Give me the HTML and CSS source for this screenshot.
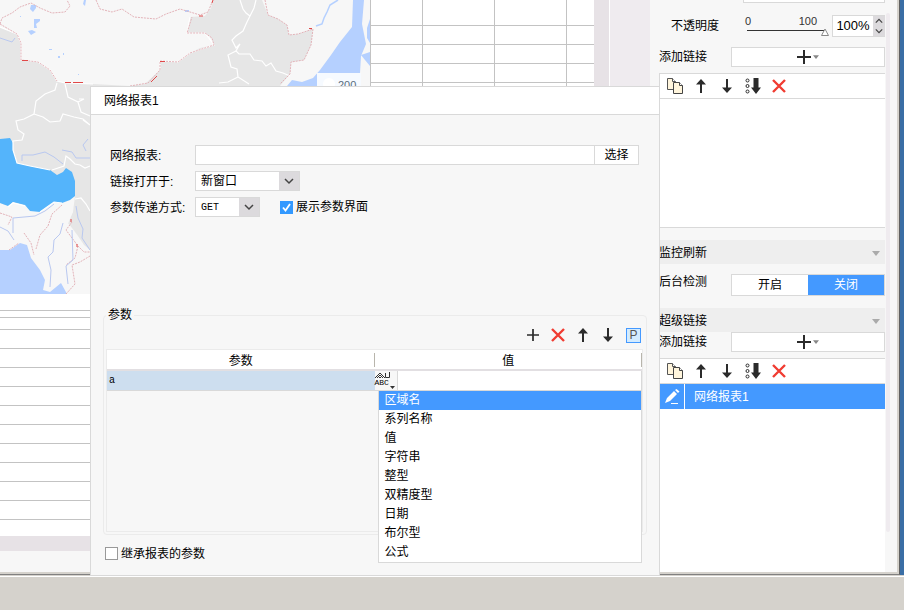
FILE: index.html
```html
<!DOCTYPE html>
<html lang="zh-CN">
<head>
    <meta charset="UTF-8">
    <meta name="viewport" content="width=device-width, initial-scale=1.0">
    <title>网络报表1</title>
    <link rel="stylesheet" href="styles.css">
</head>
<body>
<!--  shared icons  -->
<svg class="sprite" aria-hidden="true">
  <symbol id="i-plus" viewBox="0 0 14 14"><path d="M7 0v14M0 7h14" fill="none" stroke="#2b2b2b" stroke-width="2"/></symbol>
  <symbol id="i-cross" viewBox="0 0 14 14"><path d="M1 1l12 12M13 1L1 13" fill="none" stroke="#f03c32" stroke-width="2.400"/></symbol>
  <symbol id="i-up" viewBox="0 0 14 14"><path d="M7 0l5 5.500H8V14H6V5.500H2z" fill="#2b2b2b"/></symbol>
  <symbol id="i-down" viewBox="0 0 14 14"><path d="M7 14l5-5.500H8V0H6v8.500H2z" fill="#2b2b2b"/></symbol>
  <symbol id="i-bottom" viewBox="0 0 16 16">
    <path d="M8.500 0h5v9.500H16L11 16 6 9.500h2.500z" fill="#2b2b2b"/>
    <g fill="#fff" stroke="#2b2b2b"><circle cx="2.500" cy="2.500" r="1.500"/><circle cx="2.500" cy="8" r="1.500"/><circle cx="2.500" cy="13.500" r="1.500"/></g>
  </symbol>
  <symbol id="i-copy" viewBox="0 0 18 18">
    <path d="M1.500 1.500h5l3 3v8h-8z" fill="#fff5dc" stroke="#555"/><path d="M6.500 1.500v3h3" fill="#fff" stroke="#555"/>
    <path d="M7.500 5.500h6l3 3v8h-9z" fill="#fff5dc" stroke="#444"/><path d="M13.500 5.500v3h3" fill="#fff" stroke="#444"/>
  </symbol>
  <symbol id="i-caret" viewBox="0 0 8 5"><path d="M0 0h8L4 5z" fill="currentColor"/></symbol>
</svg>

<div class="desktop">
  <div class="window">
<!--  report canvas  -->
    <main class="canvas">
      <div class="left">
        <div class="map">
          <svg viewBox="0 0 370 294" role="img" aria-label="地图">
            <rect width="370" height="294" fill="#f7f7f7"/>
            <path d="M0 27L17 34L21 43L21 60L38 62L50 70L57 81L65 83L93 84L130 86L145 84L160 70L160 61L178 62L190 53L200 48L214 45L212 38L205 33L187 33L190 17L205 16L211 8L213 0L262 0L268 15L278 19L287 25L289 35L298 34L313 29L311 45L304 60L291 62L290 74L280 86L280 294L90 294L90 250L84 245L78 236L72 228L67 222L73 212L75 196L60 205L0 205Z" fill="#e6e6e6"/>
            <path d="M0 203L8 206L13 202L25 205L40 206L62 200L73 200L73 212L67 226L75 235L78 247L85 252L90 252L90 294L0 294Z" fill="#f7f7f7"/>
            <path d="M0 139L10 138L13 143L13 150L17 163L30 166L50 170L57 175L63 172L66 168L72 172L75 181L75 196L70 200L62 203L54 202L40 212L30 211L25 205L13 202L8 206L0 203Z" fill="#54b4fb"/>
            <g fill="#b5d0ff">
              <path d="M0 250L10 250L20 243L27 245L31 258L40 270L45 280L43 290L50 292L61 283L67 294L0 294Z"/>
              <path d="M353 0L364 0L362 24L366 44L361 56L360 73L317 73L317 86L287 86L292 80L302 82L313 78L320 70L331 55L340 42L352 27Z"/>
              <path d="M370 19L367 28L367 38L370 43ZM361 55L370 52V66L365 60Z"/>
              <path d="M31 5h5v3l-3 4-3-3zM34 19h6v2l-4 3 1 4h-3zM28 31l4-1 4 2-5 3zM84 0h2l-1 6-2-2zM185 10h4v2h-4zM20 16h1v1h-1zM49 49h3v1h-3zM58 56h2v2h-2zM63 53h1v2h-1zM78 74h1v1h-1z"/>
            </g>
            <path d="M338 0L330 5L327 12L324 18L322 24L316 26" fill="none" stroke="#b5d0ff" stroke-width="1.500"/>
            <g fill="none" stroke="#fff" stroke-width="1.200">
              <path d="M0 27L17 34L21 43L21 60L38 62L50 70L57 81L65 83L93 84M160 70L160 61L178 62L190 53L214 45L205 33L187 33L190 17"/>
              <path d="M240 0L243 9L246 13L250 16L247 22L243 31L236 36L232 40L236 48L240 44L236 51L239 54L250 54L254 60L262 61L266 66L271 63L276 71L283 73L290 76"/>
              <path d="M256 0L254 8L250 16M236 51L228 55L231 67L237 69L238 77L249 84M238 77L228 82L219 83"/>
              <path d="M57 83L55 90L45 94L36 101L34 114L24 119L16 121L18 130L24 134L22 140L13 141L13 150L17 163L30 166L50 170M65 84L68 97L78 102L81 112L90 116M78 102L84 99L79 99M34 114L43 117L50 122L60 121L63 114L74 117L83 119L90 125M52 170L64 166L66 156L70 159L75 164L80 165L85 168L90 166M75 199L81 198L86 204L90 211M83 120L90 125"/>
              <path d="M25 206L13 203L8 207M62 203L54 202L40 212"/>
            </g>
            <g fill="none" stroke="#e3b3b9" stroke-width="1" stroke-dasharray="2 1">
              <path d="M0 24L2 18L12 13L20 7L31 3L40 8L52 13L65 12L70 6L67 0M96 0L100 9L112 12L122 9L134 17L156 19L166 14L180 9L200 15L208 12L213 0"/>
              <path d="M0 24L17 34L21 43L21 60L38 62L50 70L57 81M130 86L148 83L160 70L160 61L178 62L190 53L214 45L212 38L205 33L187 33L192 17"/>
              <path d="M265 0L268 15L278 19L287 25L289 35L298 34L313 29L311 45L304 60L291 62L290 74L280 84"/>
              <path d="M62 205L52 214L48 226L40 235L36 249M0 213L12 217L8 225M24 233L31 243L34 255M72 222L66 230L78 246L84 252L90 252M66 294L75 284L72 265L80 262L90 256M9 250L19 243M78 246L75 258L66 265"/>
            </g>
            <path d="M65 82.500h6M73 82.500h10M22 60.500h6M151 82l6-6M160 61.500h5M212 3l1-3M199 16h4M71 219v3M77 244v3M309 28.500h3" stroke="#e04848"/>
            <g fill="none" stroke="#b9c8f0">
              <path d="M13 233L13 218L35 216L45 211L54 204M63 223L60 234L54 240L53 252L48 257L51 270L50 287M72 230L73 260L66 266L68 284M22 161L22 155L33 155L45 152L54 157L63 164M62 150L72 152L76 158L90 158M0 227L8 231L14 240M76 206L78 218L83 229L82 238L90 250M88 139L83 145L86 151M0 38L12 42L15 38"/>
            </g>
            <rect x="317" y="73" width="44" height="21" fill="#f6faff"/>
            <circle cx="329" cy="84" r="6" fill="#fff"/>
            <text class="scale" x="338" y="89">200</text>
          </svg>
        </div>
        <table class="sheet rows">
          <tr class="gap"><td></td></tr>
          <tr class="thin"><td></td></tr>
          <tr class="half"><td></td></tr>
          <tr><td></td></tr>
          <tr><td></td></tr>
          <tr><td></td></tr>
          <tr><td></td></tr>
          <tr><td></td></tr>
          <tr><td></td></tr>
          <tr><td></td></tr>
          <tr><td></td></tr>
          <tr><td></td></tr>
          <tr><td></td></tr>
        </table>
        <div class="foot"></div>
      </div>
      <table class="sheet cells">
        <tr class="tall"><td></td><td></td><td></td><td></td></tr>
        <tr><td></td><td></td><td></td><td></td></tr>
        <tr><td></td><td></td><td></td><td></td></tr>
        <tr><td></td><td></td><td></td><td></td></tr>
        <tr><td></td><td></td><td></td><td></td></tr>
      </table>
      <div class="edge"></div>
      <div class="gutter"></div>
    </main>

<!--  properties panel  -->
    <aside class="panel">
      <div class="props">
        <div class="cut"></div>
        <div class="row opacity">
          <label for="opacity">不透明度</label>
          <div class="slider">
            <div class="marks"><span>0</span><span>100</span></div>
            <input type="range" id="opacity" min="0" max="100" value="100">
          </div>
          <div class="spin">
            <input type="text" value="100%" aria-label="不透明度数值">
            <div class="steps">
              <button aria-label="增加"><svg viewBox="0 0 10 6"><path d="M1 5l4-4 4 4"/></svg></button>
              <button aria-label="减少"><svg viewBox="0 0 10 6"><path d="M1 1l4 4 4-4"/></svg></button>
            </div>
          </div>
        </div>
        <div class="row link">
          <span class="name">添加链接</span>
          <button class="add" aria-label="添加链接"><svg class="icon"><use href="#i-plus"/></svg><svg class="caret"><use href="#i-caret"/></svg></button>
        </div>
        <div class="list short">
          <div class="tools">
            <button aria-label="复制"><svg class="big"><use href="#i-copy"/></svg></button>
            <button aria-label="上移"><svg class="icon"><use href="#i-up"/></svg></button>
            <button aria-label="下移"><svg class="icon"><use href="#i-down"/></svg></button>
            <button aria-label="置底"><svg class="mid"><use href="#i-bottom"/></svg></button>
            <button aria-label="删除"><svg class="icon"><use href="#i-cross"/></svg></button>
          </div>
        </div>
        <button class="section">监控刷新<svg class="caret"><use href="#i-caret"/></svg></button>
        <div class="row check">
          <span class="name">后台检测</span>
          <div class="toggle"><button>开启</button><button class="on">关闭</button></div>
        </div>
        <button class="section">超级链接<svg class="caret"><use href="#i-caret"/></svg></button>
        <div class="row">
          <span class="name">添加链接</span>
          <button class="add" aria-label="添加超级链接"><svg class="icon"><use href="#i-plus"/></svg><svg class="caret"><use href="#i-caret"/></svg></button>
        </div>
        <div class="list long">
          <div class="tools">
            <button aria-label="复制"><svg class="big"><use href="#i-copy"/></svg></button>
            <button aria-label="上移"><svg class="icon"><use href="#i-up"/></svg></button>
            <button aria-label="下移"><svg class="icon"><use href="#i-down"/></svg></button>
            <button aria-label="置底"><svg class="mid"><use href="#i-bottom"/></svg></button>
            <button aria-label="删除"><svg class="icon"><use href="#i-cross"/></svg></button>
          </div>
          <div class="item">
            <button class="edit" aria-label="编辑"><svg class="mid" viewBox="0 0 16 16"><path d="M1 14l2-5 7-7 3 3-7 7zM11 1l1.500-1 3 2.500L14 4z" fill="#fff"/><path d="M7 14.500h7" stroke="#fff"/></svg></button>
            <span>网络报表1</span>
          </div>
        </div>
      </div>
      <div class="scroll"></div>
    </aside>
  </div>

<!--  web report dialog  -->
  <section class="dialog">
    <h1>网络报表1</h1>
    <form class="form">
      <div class="field">
        <label for="report">网络报表:</label>
        <input type="text" id="report" class="path">
        <button type="button" class="pick">选择</button>
      </div>
      <div class="field">
        <label for="target">链接打开于:</label>
        <select id="target" class="wide"><option>新窗口</option></select>
      </div>
      <div class="field">
        <label for="method">参数传递方式:</label>
        <select id="method" class="narrow"><option>GET</option></select>
        <label class="tick show"><input type="checkbox" checked>展示参数界面</label>
      </div>
    </form>
    <fieldset>
      <legend>参数</legend>
      <div class="actions">
        <button aria-label="添加"><svg class="small"><use href="#i-plus"/></svg></button>
        <button aria-label="删除"><svg class="icon"><use href="#i-cross"/></svg></button>
        <button aria-label="上移"><svg class="icon"><use href="#i-up"/></svg></button>
        <button aria-label="下移"><svg class="icon"><use href="#i-down"/></svg></button>
        <button class="param" aria-label="参数">P</button>
      </div>
      <div class="grid">
        <table class="params">
          <thead><tr><th>参数</th><th>值</th></tr></thead>
          <tbody>
            <tr>
              <td class="key">a</td>
              <td class="value">
                <div class="editor">
                  <button class="type" aria-label="值类型">
                    <svg viewBox="0 0 22 18"><path d="M0 6l5-5 5 5M2 6l3-3 3 3M4 6l1-1 1 1M10.500 1v4.500h4V0" fill="none" stroke="#333"/><path d="M15 14h5l-2.500 3z" fill="#333"/></svg>
                    <span>ABC</span>
                  </button>
                  <input type="text" aria-label="值">
                </div>
                <ul class="menu" role="listbox" aria-label="值类型">
                  <li role="option" aria-selected="true" class="active">区域名</li>
                  <li role="option">系列名称</li>
                  <li role="option">值</li>
                  <li role="option">字符串</li>
                  <li role="option">整型</li>
                  <li role="option">双精度型</li>
                  <li role="option">日期</li>
                  <li role="option">布尔型</li>
                  <li role="option">公式</li>
                </ul>
              </td>
            </tr>
          </tbody>
        </table>
      </div>
    </fieldset>
    <div class="inherit">
      <label class="tick"><input type="checkbox">继承报表的参数</label>
    </div>
  </section>
</div>
<footer class="taskbar"></footer>
</body>
</html>
```

FILE: styles.css
```css
* {
box-sizing:border-box;
}
body {
margin:0;
min-height:100vh;
display:flex;
flex-direction:column;
background:#d5d2cc;
color:#000;
font:12px/16px "Liberation Sans", "Noto Sans CJK SC", sans-serif;
}
button, input, select {
margin:0;
padding:0;
border:0;
border-radius:0;
background:none;
color:inherit;
font:inherit;
}
.sprite {
display:none;
}
svg {
display:block;
}
.icon {
width:14px;
height:14px;
}
.small {
width:12px;
height:12px;
}
.mid {
width:16px;
height:16px;
}
.big {
width:18px;
height:18px;
}
.caret {
width:8px;
height:5px;
color:#aaa;
}

/* window frame */
.desktop {
position:relative;
flex:1;
display:flex;
padding:0 4px 1px 0;
background:linear-gradient(#3a6ea5, #3a6ea5) right top / 4px calc(100% - 1px) no-repeat;
}
.window {
flex:1;
display:flex;
padding:0 2px 2px 0;
background:#d5d2cc;
border-right:1px solid #606060;
border-bottom:1px solid #808080;
}
.taskbar {
height:34px;
border-top:1px solid #fff;
background:#d5d2cc;
}

/* report canvas */
.canvas {
flex:1;
display:flex;
align-items:stretch;
background:#f7f7f7;
}
.left {
width:370px;
display:flex;
flex-direction:column;
}
.map svg {
width:100%;
height:auto;
}
.scale {
font:11px "Liberation Sans", sans-serif;
fill:#5a6d7c;
}
.sheet {
border-spacing:0;
background:#fff;
}
.sheet td {
height:19px;
padding:0;
border-bottom:1px solid #c3c3c3;
}
.rows .gap td {
height:17px;
}
.rows .thin td {
height:7px;
}
.rows .half td {
height:12px;
}
.foot {
height:31px;
border-top:16px solid #fff;
background:#e7e2e6;
}
.cells {
flex:1;
align-self:flex-start;
table-layout:fixed;
border-left:1px solid #c3c3c3;
}
.cells td {
width:72px;
border-right:1px solid #c3c3c3;
}
.cells td:first-child {
width:52px;
}
.cells td:last-child {
width:27px;
border-right:0;
}
.cells .tall td {
height:26px;
}
.edge {
width:16px;
background:#e7e2e6;
border-right:1px solid #fff;
}
.gutter {
width:40px;
background:#efebef;
}

/* properties panel */
.panel {
width:247px;
display:flex;
gap:1px;
padding-left:9px;
background:#f7f7f7;
}
.props {
width:226px;
display:flex;
flex-direction:column;
}
.scroll {
width:4px;
margin:13px 0 40px;
border-radius:2px;
background:#efebef;
}
.cut {
height:3px;
margin-left:84px;
border:1px solid #d9d9d9;
border-top:0;
background:#fff;
}
.row {
display:flex;
align-items:center;
}
.opacity {
height:22px;
margin-top:12px;
padding-left:12px;
}
.opacity > label {
flex:none;
width:72px;
}
.slider {
flex:none;
width:86px;
height:22px;
}
.marks {
display:flex;
justify-content:space-between;
padding:0 12px 0 2px;
font-size:11px;
line-height:12px;
color:#333;
}
.slider input {
display:block;
width:86px;
height:10px;
appearance:none;
background:linear-gradient(#333, #333) 4px 3px / 77px 1px no-repeat;
}
.slider input::-webkit-slider-thumb {
appearance:none;
width:8px;
height:8px;
background:url("data:image/svg+xml,%3Csvg xmlns='http://www.w3.org/2000/svg' viewBox='0 0 8 8'%3E%3Cpath d='M4 1L7.500 7.500H.5z' fill='white' stroke='%23888'/%3E%3C/svg%3E");
}
.spin {
flex:1;
height:22px;
display:flex;
margin-left:3px;
border:1px solid #d9d9d9;
border-right:0;
background:#fff;
}
.spin > input {
flex:1;
width:0;
font-size:13px;
text-align:center;
}
.steps {
width:12px;
display:flex;
flex-direction:column;
background:#dcdadd;
}
.steps button {
flex:1;
display:flex;
align-items:center;
justify-content:center;
}
.steps svg {
width:8px;
height:6px;
fill:none;
stroke:#444;
stroke-width:1.5;
}
.link {
margin-top:10px;
}
.name {
width:72px;
}
.add {
flex:1;
height:20px;
display:flex;
align-items:center;
justify-content:center;
gap:2px;
border:1px solid #d9d9d9;
background:#fff;
}
.add .caret {
width:6px;
height:4px;
color:#888;
}
.list {
margin-top:6px;
border:1px solid #d9d9d9;
border-right:0;
background:#fff;
}
.short {
height:155px;
}
.long {
flex:1;
border-bottom:0;
}
.tools {
height:25px;
display:flex;
align-items:center;
gap:2px;
padding-left:3px;
border-bottom:1px solid #d9d9d9;
}
.tools button {
width:24px;
height:24px;
display:flex;
align-items:center;
justify-content:center;
}
.item {
height:25px;
display:flex;
align-items:center;
gap:9px;
background:#4499ff;
color:#fff;
}
.edit {
width:25px;
height:25px;
display:flex;
align-items:center;
justify-content:center;
border-right:1px solid #fff;
}
.section {
height:24px;
display:flex;
align-items:center;
justify-content:space-between;
margin-top:12px;
padding:2px 5px 0 0;
background:#eee;
}
.check {
margin-top:10px;
align-items:flex-start;
}
.toggle {
flex:1;
height:22px;
display:flex;
border:1px solid #d9d9d9;
background:#fff;
}
.toggle button {
flex:1;
}
.toggle .on {
background:#4499ff;
color:#fff;
}

/* dialog */
.dialog {
position:absolute;
top:86px;
right:244px;
bottom:0;
left:90px;
display:flex;
flex-direction:column;
border:1px solid #d9d9d9;
background:#f7f7f7;
}
h1 {
height:28px;
margin:0;
padding-left:13px;
border-bottom:1px solid #d9d9d9;
background:#fff;
font-size:12px;
font-weight:normal;
line-height:28px;
}
.form {
display:flex;
flex-direction:column;
gap:6px;
padding:30px 20px 0 19px;
}
.field {
height:20px;
display:flex;
align-items:center;
}
.field > label:first-child {
width:85px;
padding-top:2px;
}
.path {
flex:1;
height:20px;
padding:0 5px;
border:1px solid #d9d9d9;
background:#fff;
}
.pick {
width:44px;
height:20px;
border:1px solid #d9d9d9;
border-left:0;
background:#fff;
}
select {
height:20px;
padding-left:5px;
appearance:none;
border:1px solid #d9d9d9;
background:url("data:image/svg+xml,%3Csvg xmlns='http://www.w3.org/2000/svg' viewBox='0 0 20 20'%3E%3Cpath fill='%23dcdadd' d='M0 0h20v20H0z'/%3E%3Cpath d='M6 8l4 4 4-4' fill='none' stroke='%23444' stroke-width='1.500'/%3E%3C/svg%3E") right center / 20px 20px no-repeat #fff;
}
.wide {
width:105px;
}
.narrow {
width:65px;
font:10px "Liberation Mono", monospace;
}
.tick {
display:flex;
align-items:center;
gap:3px;
}
.show {
margin-left:20px;
}
.tick input {
width:13px;
height:13px;
appearance:none;
border:1px solid #999;
background:#fff;
}
.tick input:checked {
border-color:#3399ff;
background:url("data:image/svg+xml,%3Csvg xmlns='http://www.w3.org/2000/svg' viewBox='0 0 11 11'%3E%3Cpath d='M2 5.500l2.500 3L9 2' fill='none' stroke='white' stroke-width='1.800'/%3E%3C/svg%3E") #3399ff;
}

/* parameters */
fieldset {
flex:1;
display:flex;
flex-direction:column;
min-width:0;
margin:90px 12px 0;
padding:0 3px 2px 2px;
border:1px solid #ebebeb;
border-radius:4px;
}
legend {
padding:0 2px;
}
.actions {
height:24px;
display:flex;
align-items:center;
justify-content:flex-end;
gap:1px;
padding-right:2px;
}
.actions button {
width:24px;
height:24px;
display:flex;
align-items:center;
justify-content:center;
}
.actions .param {
width:15px;
height:15px;
margin-left:5px;
border:1px solid #4499ff;
background:#d3ebff;
color:#555;
}
.grid {
flex:1;
margin-top:2px;
border:1px solid #ebebeb;
}
.params {
width:100%;
table-layout:fixed;
border-spacing:0;
}
.params th {
position:relative;
height:21px;
padding:2px 0 0;
border-bottom:2px solid #e2dfe2;
background:#fff;
font-weight:normal;
}
.params th::after {
content:"";
position:absolute;
top:3px;
right:0;
width:1px;
height:14px;
background:#b8b5ac;
}
.params td {
height:20px;
padding:0;
}
.params .key {
padding-left:2px;
border-bottom:1px solid #d9d9d9;
background:#cddeef;
font:10px "Liberation Mono", monospace;
}
.value {
position:relative;
}
.editor {
height:20px;
display:flex;
border-right:1px solid #d9d9d9;
border-bottom:1px solid #d9d9d9;
}
.type {
position:relative;
width:23px;
border-right:1px solid #d9d9d9;
}
.type svg {
width:22px;
height:18px;
}
.type span {
position:absolute;
left:0;
bottom:0;
font:8px/14px "Liberation Mono", monospace;
}
.editor input {
flex:1;
background:#fff;
}
.menu {
position:absolute;
z-index:1;
top:100%;
right:0;
left:3px;
margin:0;
padding:0;
border:1px solid #d9d9d9;
border-top:0;
background:#fff;
list-style:none;
}
.menu li {
padding-left:6px;
line-height:19px;
}
.menu .active {
background:#4499ff;
color:#fff;
}
.inherit {
height:40px;
display:flex;
align-items:center;
padding:0 0 3px 14px;
}
```
